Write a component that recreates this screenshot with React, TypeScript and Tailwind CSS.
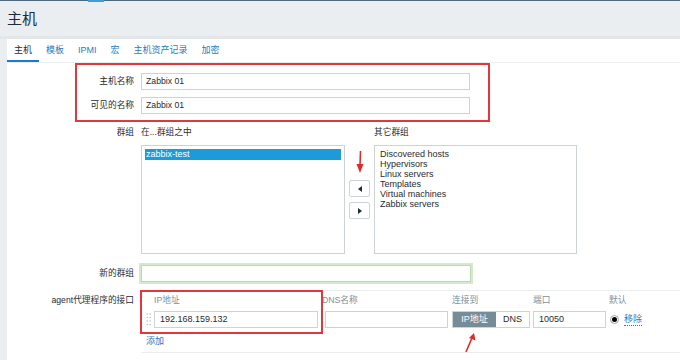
import type { ReactNode } from "react";

const otherGroups = [
  "Discovered hosts",
  "Hypervisors",
  "Linux servers",
  "Templates",
  "Virtual machines",
  "Zabbix servers",
];

const tabs = ["主机", "模板", "IPMI", "宏", "主机资产记录", "加密"];

function Row({
  label,
  children,
  className = "",
  labelClass = "",
}: {
  label?: string;
  children: ReactNode;
  className?: string;
  labelClass?: string;
}) {
  return (
    <div className={`flex gap-[7px] ${className}`}>
      <div className={`w-[127px] shrink-0 text-right ${labelClass}`}>{label}</div>
      {children}
    </div>
  );
}

function Arrow({ dir }: { dir: "left" | "right" }) {
  return (
    <button className="flex h-[17px] w-[21px] items-center justify-center rounded-[2px] border border-[#cdd3d6] bg-white">
      <svg width="6" height="6" viewBox="0 0 6 6">
        {dir === "left" ? (
          <polygon points="5,0 5,6 1,3" fill="#1f2c33" />
        ) : (
          <polygon points="1,0 1,6 5,3" fill="#1f2c33" />
        )}
      </svg>
    </button>
  );
}

function DragHandle() {
  return (
    <svg width="6" height="14" viewBox="0 0 6 14" className="shrink-0">
      {[1, 4.5, 8, 11.5].map((y) => (
        <g key={y} fill="#b8c1c6">
          <circle cx="1.2" cy={y} r="0.8" />
          <circle cx="4.2" cy={y} r="0.8" />
        </g>
      ))}
    </svg>
  );
}

export default function App() {
  return (
    <div className="relative h-[360px] w-[680px] overflow-hidden bg-[#ebeef0] font-['Liberation_Sans','Noto_Sans_CJK_SC',sans-serif] text-[8.7px] text-[#1f2c33]">
      <div className="relative h-px bg-[#4b6a80]">
        <div className="absolute left-[88px] top-0 h-[2px] w-[16px] bg-[#3d9ce0]" />
      </div>
      <header className="flex h-[38px] items-center border-b-[3px] border-[#e4e7e9] px-[7px]">
        <h1 className="text-[15px] leading-none">主机</h1>
      </header>

      <main className="ml-[7px] h-[321px] bg-white">
        <nav className="flex h-[24px] border-b border-[#ebeef0]">
          {tabs.map((t, i) => (
            <div
              key={t}
              className={`flex items-center border-b-2 px-[7px] pt-[3px] text-[9px] ${
                i === 0 ? "border-[#1f7bc1] text-[#1f2c33]" : "border-transparent text-[#1f7bc1]"
              }`}
            >
              {t}
            </div>
          ))}
        </nav>

        <div className="pt-[10px]">
          <Row label="主机名称" labelClass="leading-[17px]">
            <div className="flex h-[17px] w-[329px] items-center border border-[#cdd3d6] pl-[4px]">Zabbix 01</div>
          </Row>
          <Row label="可见的名称" labelClass="leading-[17px]" className="mt-[7px]">
            <div className="flex h-[17px] w-[329px] items-center border border-[#cdd3d6] pl-[4px]">Zabbix 01</div>
          </Row>

          <Row label="群组" labelClass="leading-[12px]" className="mt-[12px]">
            <div className="flex leading-[12px]">
              <span className="w-[233px]">在...群组之中</span>
              <span>其它群组</span>
            </div>
          </Row>

          <Row className="mt-[7px]">
            <div className="flex items-start gap-[4px]">
              <div className="h-[109px] w-[204px] border border-[#cdd3d6] p-[3px]">
                <div className="bg-[#1d9ad8] pl-[1px] text-[9px] leading-[11px] text-white">zabbix-test</div>
              </div>
              <div className="mt-[35px] flex flex-col gap-[5px]">
                <Arrow dir="left" />
                <Arrow dir="right" />
              </div>
              <div className="h-[109px] w-[203px] border border-[#cdd3d6] px-[5px] pt-[3px] text-[9px] leading-[10px]">
                {otherGroups.map((g) => (
                  <div key={g}>{g}</div>
                ))}
              </div>
            </div>
          </Row>

          <Row label="新的群组" labelClass="leading-[17px]" className="mt-[11px]">
            <div className="h-[17px] w-[330px] border border-[#b9dab1] ring-2 ring-[#d3eacd]" />
          </Row>

          <Row label="agent代理程序的接口" labelClass="pt-[4px] leading-[12px]" className="mt-[8px]">
            <div className="flex-1 border-b border-t border-[#ebeef0] pb-[4px]">
              <div className="flex h-[20px] items-center text-[#7c8f99]">
                <span className="w-[181px] pl-[13px]">IP地址</span>
                <span className="w-[130px]">DNS名称</span>
                <span className="w-[81px]">连接到</span>
                <span className="w-[76px]">端口</span>
                <span>默认</span>
              </div>
              <div className="flex h-[17px] items-center">
                <div className="flex w-[181px] items-center">
                  <div className="ml-[5px] w-[8px]">
                    <DragHandle />
                  </div>
                  <div className="flex h-[17px] w-[164px] items-center border border-[#cdd3d6] pl-[5px] text-[9px]">
                    192.168.159.132
                  </div>
                </div>
                <div className="w-[130px] pl-[3px]">
                  <div className="h-[17px] w-[123px] border border-[#cdd3d6]" />
                </div>
                <div className="w-[81px]">
                  <div className="flex h-[17px] w-[78px] border border-[#cdd3d6] text-[9px]">
                    <span className="flex w-[43px] items-center justify-center bg-[#768d99] text-white">IP地址</span>
                    <span className="flex flex-1 items-center justify-center">DNS</span>
                  </div>
                </div>
                <div className="w-[76px]">
                  <div className="flex h-[17px] w-[73px] items-center border border-[#cdd3d6] pl-[5px] text-[9px]">10050</div>
                </div>
                <div className="flex items-center gap-[5px] pl-[1px]">
                  <span className="flex h-[9px] w-[9px] items-center justify-center rounded-full border border-[#9aa6ad] bg-white">
                    <span className="h-[5px] w-[5px] rounded-full bg-black" />
                  </span>
                  <span className="border-b border-dotted border-[#1f7bc1] text-[9px] leading-[11px] text-[#1f7bc1]">移除</span>
                </div>
              </div>
              <div className="mt-[6px] pl-[5px] text-[9px] leading-[14px] text-[#1f7bc1]">添加</div>
            </div>
          </Row>
        </div>
      </main>

      {/* red annotations drawn over the form */}
      <div className="pointer-events-none absolute left-[75px] top-[63px] h-[59px] w-[415px] border-2 border-[#e2373b]" />
      <div className="pointer-events-none absolute left-[140px] top-[290px] h-[44px] w-[183px] border-2 border-[#e2373b]" />
      <svg className="pointer-events-none absolute left-[354px] top-[150px]" width="12" height="24" viewBox="0 0 12 24">
        <line x1="6.5" y1="1" x2="6" y2="16" stroke="#e02b2b" strokeWidth="1.6" />
        <polygon points="2.5,14 9.5,14 6,23" fill="#e02b2b" />
      </svg>
      <svg className="pointer-events-none absolute left-[460px] top-[331px]" width="18" height="24" viewBox="0 0 18 24">
        <line x1="6" y1="21" x2="11.5" y2="8" stroke="#e02b2b" strokeWidth="1.6" />
        <polygon points="9,7 15.5,9.5 14,2" fill="#e02b2b" />
      </svg>
    </div>
  );
}
